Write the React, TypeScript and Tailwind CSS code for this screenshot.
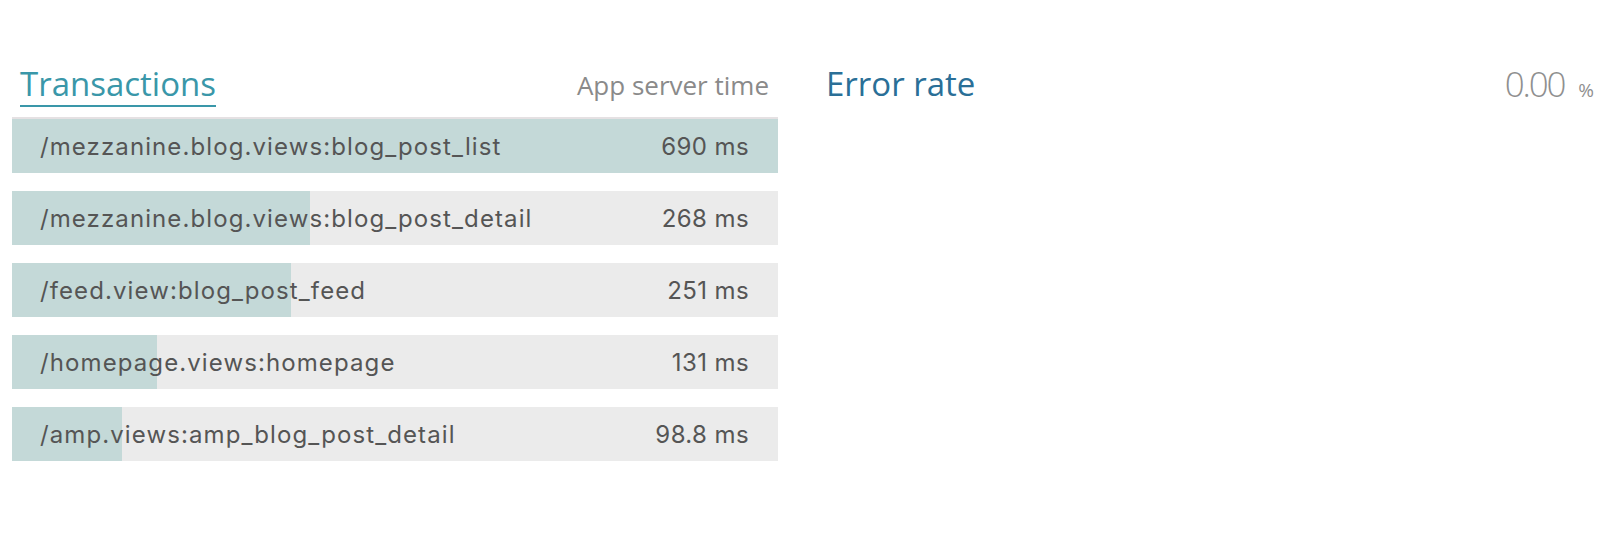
const rows = [
  { name: "/mezzanine.blog.views:blog_post_list", ms: 690, label: "690 ms" },
  { name: "/mezzanine.blog.views:blog_post_detail", ms: 268, label: "268 ms" },
  { name: "/feed.view:blog_post_feed", ms: 251, label: "251 ms" },
  { name: "/homepage.views:homepage", ms: 131, label: "131 ms" },
  { name: "/amp.views:amp_blog_post_detail", ms: 98.8, label: "98.8 ms" },
];

const max = 690;

export default function App() {
  return (
    <div
      className="flex w-[1616px] h-[542px] bg-white pl-3 pt-[64px] text-[#555]"
      style={{ fontFamily: '"Open Sans", sans-serif' }}
    >
      <div className="w-[766px] shrink-0">
        <div className="flex items-start justify-between pl-2 pr-[9px]">
          <a className="border-b-2 border-[#3a97a9] pb-[1px] text-[33px] leading-[40px] text-[#3a97a9]">
            Transactions
          </a>
          <span className="mt-[6px] text-[26px] leading-[30px] text-[#8a8a8a]">App server time</span>
        </div>

        <div className="mt-[10px] flex flex-col gap-[18px]">
          {rows.map((r, i) => (
            <div
              key={r.name}
              className={
                i === 0
                  ? "relative h-[56px] border-t-2 border-[#e5e1e3] bg-[#ebebeb]"
                  : "relative h-[54px] bg-[#ebebeb]"
              }
            >
              <div
                className="absolute inset-y-0 left-0 bg-[#c4d9d8]"
                style={{ width: `${(r.ms / max) * 100}%` }}
              />
              <div
                className="relative flex h-full items-center justify-between pl-[28px] pr-[29px] pt-[1px] text-[24px]"
                style={{ fontFamily: "Inter, sans-serif" }}
              >
                <span className="tracking-[1.1px]">{r.name}</span>
                <span className="tracking-[0.4px]">{r.label}</span>
              </div>
            </div>
          ))}
        </div>
      </div>

      <div className="flex flex-1 items-start justify-between pl-[48px] pr-[22px]">
        <span className="text-[33px] leading-[40px] text-[#2a6f97]">Error rate</span>
        <span className="flex items-baseline text-[#8f8f8f]">
          <span className="text-[35px] font-light leading-[40px] tracking-[-2.2px]">0.00</span>
          <span className="ml-[14px] text-[19px]">%</span>
        </span>
      </div>
    </div>
  );
}
